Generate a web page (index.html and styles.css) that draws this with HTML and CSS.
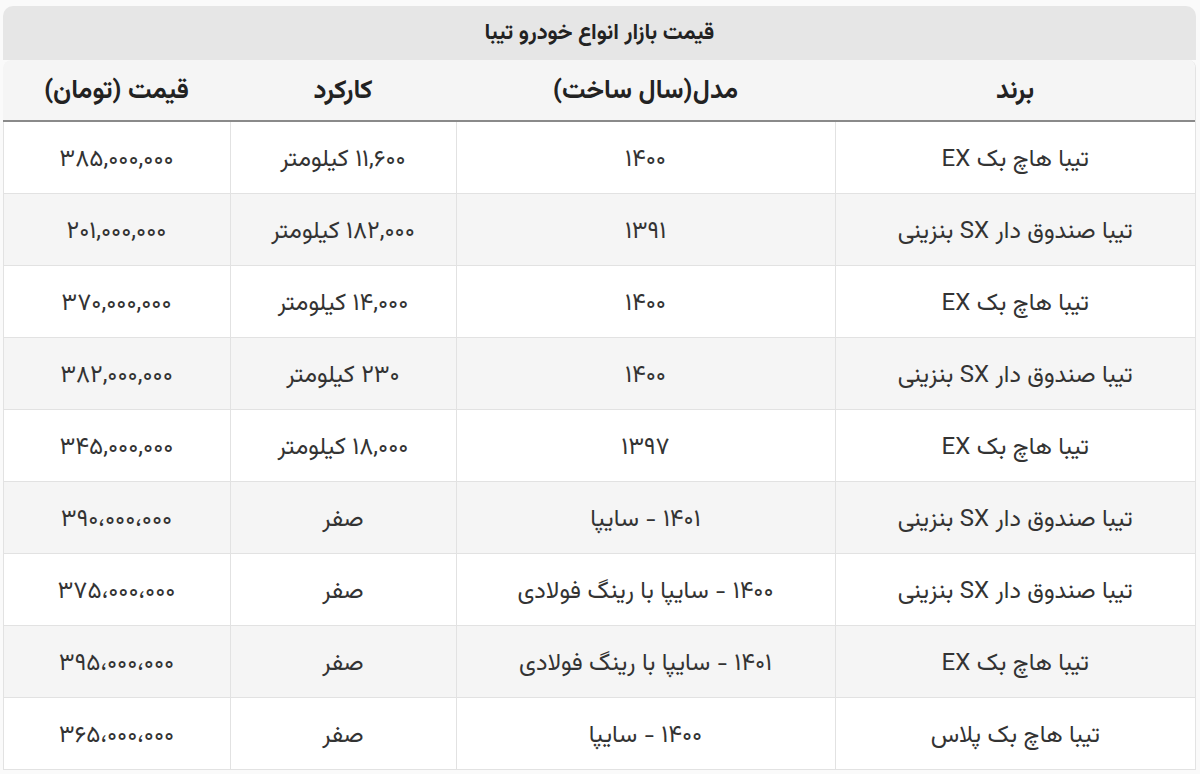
FILE: index.html
```html
<!DOCTYPE html>
<html lang="fa" dir="rtl">
<head>
<meta charset="utf-8">
<title>قیمت بازار انواع خودرو تیبا</title>
<link rel="stylesheet" href="styles.css">
</head>
<body>
<div class="wrap">
  <div class="title">قیمت بازار انواع خودرو تیبا</div>
  <div class="card">
    <table class="price-table">
      <colgroup>
        <col class="c-brand">
        <col class="c-model">
        <col class="c-km">
        <col class="c-price">
      </colgroup>
      <thead>
        <tr><th>برند</th><th>مدل(سال ساخت)</th><th>کارکرد</th><th>قیمت (تومان)</th></tr>
      </thead>
      <tbody>
        <tr><td>تیبا هاچ بک EX</td><td>۱۴۰۰</td><td>۱۱,۶۰۰ کیلومتر</td><td>۳۸۵,۰۰۰,۰۰۰</td></tr>
        <tr><td>تیبا صندوق دار SX بنزینی</td><td>۱۳۹۱</td><td>۱۸۲,۰۰۰ کیلومتر</td><td>۲۰۱,۰۰۰,۰۰۰</td></tr>
        <tr><td>تیبا هاچ بک EX</td><td>۱۴۰۰</td><td>۱۴,۰۰۰ کیلومتر</td><td>۳۷۰,۰۰۰,۰۰۰</td></tr>
        <tr><td>تیبا صندوق دار SX بنزینی</td><td>۱۴۰۰</td><td>۲۳۰ کیلومتر</td><td>۳۸۲,۰۰۰,۰۰۰</td></tr>
        <tr><td>تیبا هاچ بک EX</td><td>۱۳۹۷</td><td>۱۸,۰۰۰ کیلومتر</td><td>۳۴۵,۰۰۰,۰۰۰</td></tr>
        <tr><td>تیبا صندوق دار SX بنزینی</td><td>۱۴۰۱ - سایپا</td><td>صفر</td><td>۳۹۰،۰۰۰،۰۰۰</td></tr>
        <tr><td>تیبا صندوق دار SX بنزینی</td><td>۱۴۰۰ - سایپا با رینگ فولادی</td><td>صفر</td><td>۳۷۵،۰۰۰،۰۰۰</td></tr>
        <tr><td>تیبا هاچ بک EX</td><td>۱۴۰۱ - سایپا با رینگ فولادی</td><td>صفر</td><td>۳۹۵،۰۰۰،۰۰۰</td></tr>
        <tr><td>تیبا هاچ بک پلاس</td><td>۱۴۰۰ - سایپا</td><td>صفر</td><td>۳۶۵،۰۰۰،۰۰۰</td></tr>
      </tbody>
    </table>
  </div>
</div>
</body>
</html>
```
FILE: styles.css
```css
* { box-sizing: border-box; }
html, body {
  margin: 0;
  padding: 0;
  background: #fafafa;
  font-family: "Vazirmatn", "Noto Sans Arabic", "DejaVu Sans", sans-serif;
  color: #333;
}
.wrap {
  padding: 6px 4px 0 3px;
}
.title {
  height: 54px;
  background: #e6e6e6;
  border-radius: 10px 10px 0 0;
  display: flex;
  align-items: center;
  justify-content: center;
  font-weight: bold;
  font-size: 22px;
  color: #222;
}
.card {
  background: #fff;
  border-right: 1px solid #e3e3e3;
  border-radius: 8px 8px 0 0;
  overflow: hidden;
}
.price-table {
  width: 100%;
  border-collapse: collapse;
  table-layout: fixed;
}
.c-brand { width: 360px; }
.c-model { width: 379px; }
.c-km { width: 226px; }
.c-price { width: 227px; }
.price-table th {
  height: 61px;
  background: #f5f5f5;
  font-size: 26px;
  font-weight: bold;
  color: #222;
  border-bottom: 2px solid #8a8a8a;
  text-align: center;
  padding: 3px 8px 0;
}
.price-table td {
  height: 72px;
  font-size: 24px;
  text-align: center;
  border: 1px solid #e2e2e2;
  padding: 5px 8px 0;
  color: #333;
}
.price-table tbody tr:nth-child(even) td { background: #f5f5f5; }
.price-table tbody tr:nth-child(odd) td { background: #fff; }
.price-table tr td:first-child { border-right: none; }
```
